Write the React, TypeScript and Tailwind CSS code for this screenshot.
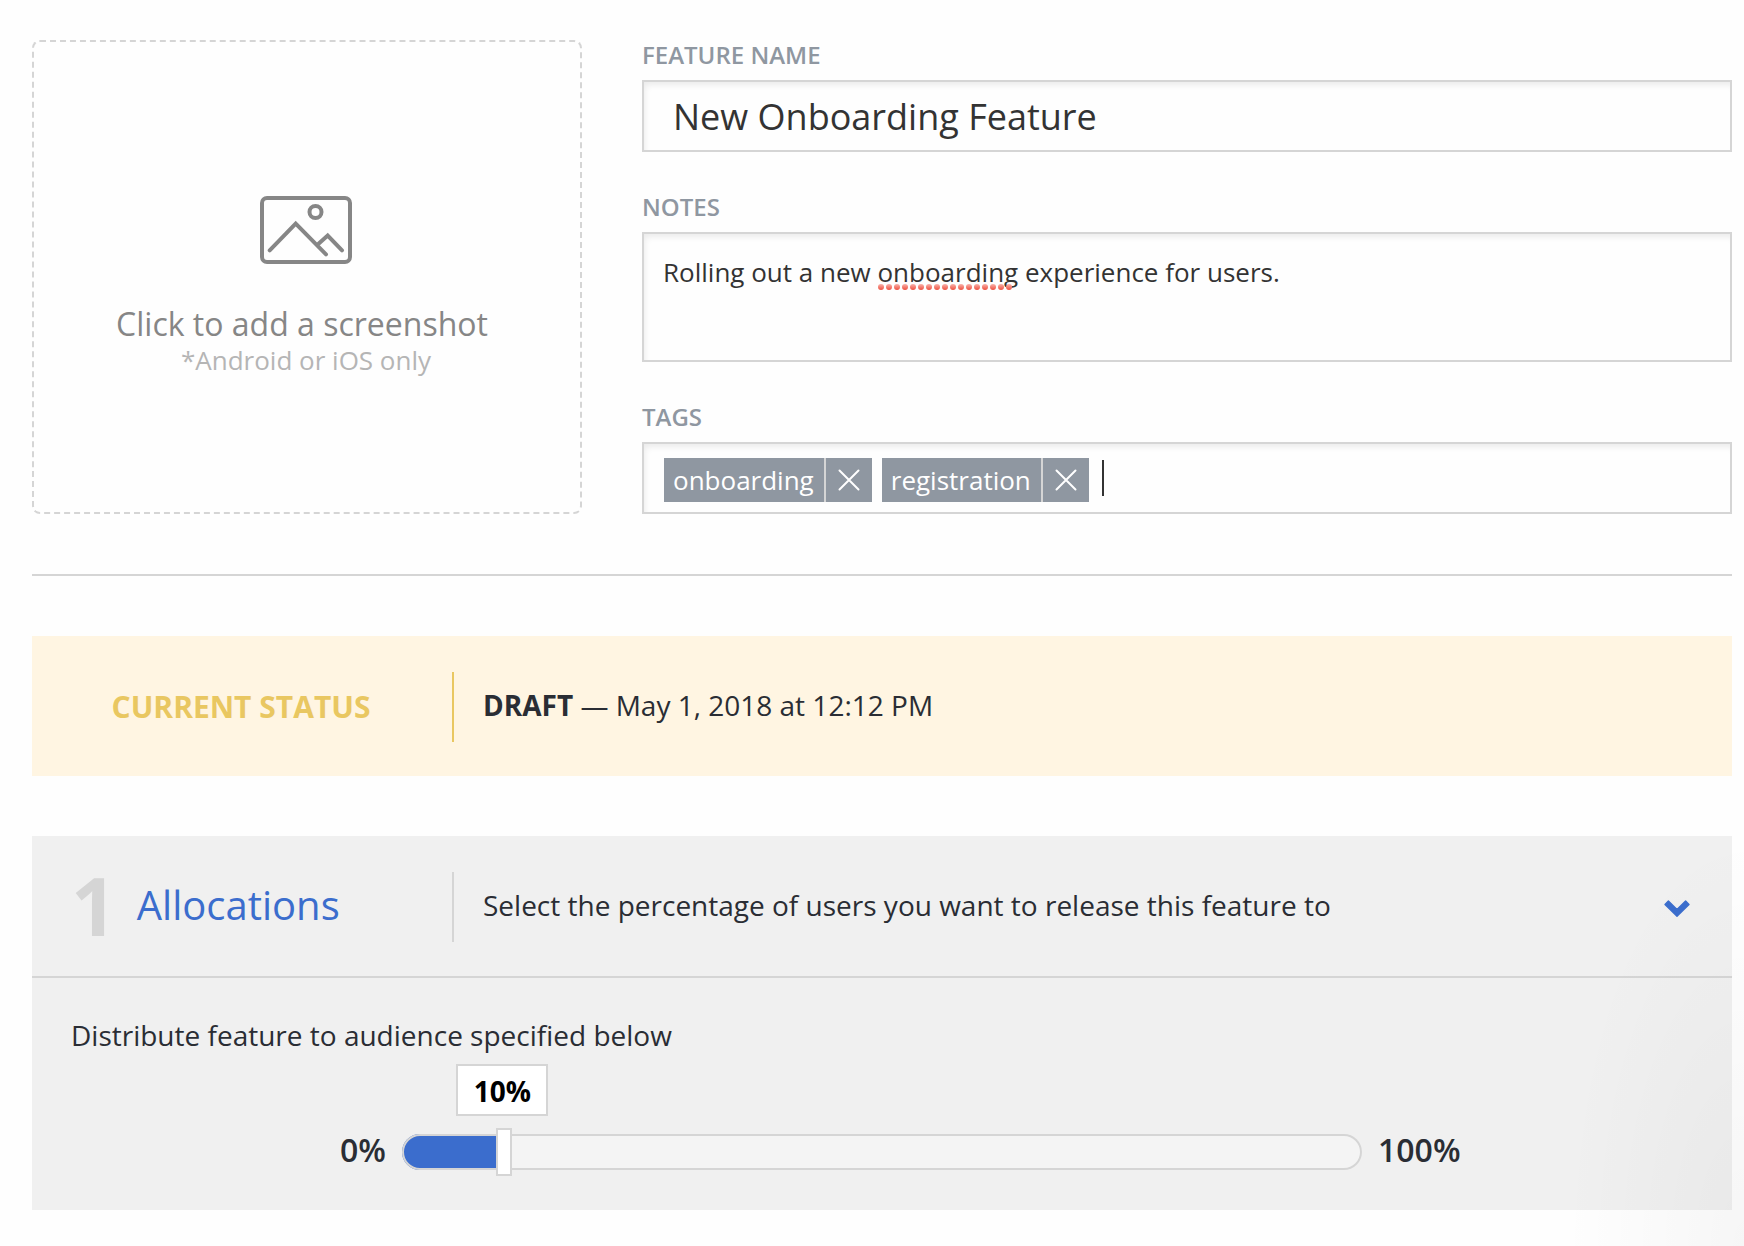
import { useState } from 'react'

const SPELLCHECK_DOTS = 17

function ImageIcon() {
  return (
    <svg width="92" height="68" viewBox="0 0 92 68" fill="none" stroke="#868686" strokeWidth="4" aria-hidden="true">
      <rect x="2" y="2" width="88" height="64" rx="5" />
      <circle cx="55.5" cy="16" r="6" />
      <path d="M9.7 54.3 35.7 27.7 66 58.3M58 48.3l9.7-8.8L82 54.3" strokeWidth="4" strokeLinecap="round" />
    </svg>
  )
}

function CloseIcon() {
  return (
    <svg width="22" height="22" viewBox="0 0 22 22" fill="none" stroke="#fff" strokeWidth="2" strokeLinecap="round" aria-hidden="true">
      <path d="M1.5 1.5l19 19M20.5 1.5l-19 19" />
    </svg>
  )
}

function ChevronIcon() {
  return (
    <svg width="26" height="18" viewBox="0 0 26 18" fill="#3b6dcd" stroke="#3b6dcd" strokeWidth="1.4" strokeLinejoin="round" aria-hidden="true">
      <path d="M4.4 1 1 4.4 13 16.2 25 4.4 21.6 1 13 9.4z" />
    </svg>
  )
}

function Tag({ name, onRemove }: { name: string; onRemove: () => void }) {
  return (
    <span className="flex h-11 bg-[#8f97a1] text-[26px] leading-[44px] text-white">
      <span className="pr-2.5 pl-[9px]">{name}</span>
      <button
        type="button"
        aria-label={`Remove ${name}`}
        onClick={onRemove}
        className="flex w-12 items-center justify-center border-l-2 border-[#d5d5d5]"
      >
        <CloseIcon />
      </button>
    </span>
  )
}

export default function App() {
  const [name, setName] = useState('New Onboarding Feature')
  const [notes, setNotes] = useState('Rolling out a new onboarding experience for users.')
  const [tags, setTags] = useState(['onboarding', 'registration'])
  const [draftTag, setDraftTag] = useState('')
  const [percent, setPercent] = useState(10)
  const [open, setOpen] = useState(true)

  const labelClass = 'mb-2.5 block text-2xl leading-[30px] font-semibold text-[#8f97a1]'
  const fieldClass = 'block w-full border-2 border-[#d5d5d5] bg-[#fefefe] text-[#333] shadow-[inset_3px_5px_6px_-2px_rgba(0,0,0,0.08)] outline-none'

  return (
    <div className="relative min-h-screen bg-[#fefefe] pt-10 pr-3 pl-8 font-['Open_Sans',sans-serif] text-[#2a2d34]">
      <section className="grid grid-cols-[55fr_109fr] gap-[60px]">
        <button
          type="button"
          className="flex flex-col items-center justify-center rounded-lg border-2 border-dashed border-[#d5d5d5] pt-5 pr-0.5"
        >
          <ImageIcon />
          <span className="mt-[42px] pr-2 text-[32px] leading-9 text-[#868686]">Click to add a screenshot</span>
          <span className="text-[26px] leading-9 text-[#b5b5b5]">*Android or iOS only</span>
        </button>

        <div className="flex flex-col gap-10">
          <div>
            <label htmlFor="feature-name" className={labelClass}>FEATURE NAME</label>
            <input
              id="feature-name"
              type="text"
              value={name}
              onChange={(e) => setName(e.target.value)}
              className={`${fieldClass} h-[72px] px-[29px] text-4xl`}
            />
          </div>

          <div>
            <label htmlFor="notes" className={labelClass}>NOTES</label>
            <div className="relative">
              <textarea
                id="notes"
                value={notes}
                spellCheck={false}
                onChange={(e) => setNotes(e.target.value)}
                className={`${fieldClass} h-[130px] resize-none px-[19px] py-5 text-[26px] leading-9`}
              />
              {/* spellcheck underline */}
              <svg width="136" height="6" className="pointer-events-none absolute top-[52px] left-[236px]" aria-hidden="true">
                <defs>
                  <linearGradient id="dot" x1="0" y1="0" x2="0" y2="1">
                    <stop offset="0" stopColor="#f9b3ab" />
                    <stop offset="1" stopColor="#ee4f3f" />
                  </linearGradient>
                </defs>
                {Array.from({ length: SPELLCHECK_DOTS }, (_, i) => (
                  <circle key={i} cx={3 + i * 8} cy="3" r="3" fill="url(#dot)" />
                ))}
              </svg>
            </div>
          </div>

          <div>
            <label htmlFor="tags" className={labelClass}>TAGS</label>
            <div className={`${fieldClass} h-[72px]`}>
              <div className="flex gap-2.5 px-5 pt-3.5">
                {tags.map((tag) => (
                  <Tag key={tag} name={tag} onRemove={() => setTags(tags.filter((t) => t !== tag))} />
                ))}
                <div className="flex flex-1 pl-[3px]">
                  <span className="mt-0.5 h-9 w-0.5 bg-[#333]" />
                  <input
                    id="tags"
                    type="text"
                    value={draftTag}
                    onChange={(e) => setDraftTag(e.target.value)}
                    className="h-11 min-w-0 flex-1 bg-transparent text-[26px] caret-transparent outline-none"
                  />
                </div>
              </div>
            </div>
          </div>
        </div>
      </section>

      <hr className="my-[60px] border-t-2 border-[#d5d5d5]" />

      <section className="flex min-h-35 items-center bg-[#fff5e2]">
        <h2 className="w-[420px] shrink-0 pr-0.5 text-center text-[30px] font-bold text-[#e9c761]">CURRENT STATUS</h2>
        <div className="mt-0.5 h-[70px] w-0.5 bg-[#e9c761]" />
        <p className="px-[29px] pb-0.5 text-[28px]">
          <strong className="font-bold">DRAFT</strong> — May 1, 2018 at 12:12 PM
        </p>
      </section>

      <section className="mt-[60px] bg-[#f0f0f0]">
        <header className="flex min-h-35 items-center pr-[42px]">
          <div className="flex h-35 w-[420px] shrink-0 items-center gap-5 pb-0.5 pl-[39px]">
            <span className="text-[80px] leading-none font-bold text-[#d5d5d5]">1</span>
            <h2 className="text-[40px] text-[#3b6dcd]">Allocations</h2>
          </div>
          <div className="mt-0.5 h-[70px] w-0.5 bg-[#d5d5d5]" />
          <p className="flex-1 px-[29px] pb-0.5 text-[28px]">Select the percentage of users you want to release this feature to</p>
          <button
            type="button"
            aria-label="Toggle allocations"
            aria-expanded={open}
            onClick={() => setOpen(!open)}
            className="mt-1.5"
          >
            <ChevronIcon />
          </button>
        </header>

        {open && (
          <div className="border-t-2 border-[#d5d5d5] px-[39px] py-10">
            <label htmlFor="percent" className="block text-[28px] leading-[34px]">
              Distribute feature to audience specified below
            </label>
            <div className="mt-[82px] grid grid-cols-[1fr_minmax(0,960px)_1fr] items-center gap-4 text-[32px] leading-8 font-semibold">
              <span className="pb-1 text-right">0%</span>
              <div className="relative h-9">
                <output
                  htmlFor="percent"
                  className="absolute bottom-full mb-[18px] h-[52px] w-[92px] -translate-x-1/2 border-2 border-[#d5d5d5] bg-white text-center text-[28px] leading-[50px] font-bold text-black"
                  style={{ left: `calc((100% - 16px) * ${percent / 100} + 6px)` }}
                >
                  {percent}%
                </output>
                <input
                  id="percent"
                  type="range"
                  min={0}
                  max={100}
                  value={percent}
                  onChange={(e) => setPercent(Number(e.target.value))}
                  className="block h-9 w-full appearance-none rounded-full shadow-[inset_0_0_0_2px_#d5d5d5] [&::-webkit-slider-runnable-track]:h-9 [&::-webkit-slider-thumb]:-mt-1.5 [&::-webkit-slider-thumb]:h-12 [&::-webkit-slider-thumb]:w-4 [&::-webkit-slider-thumb]:appearance-none [&::-webkit-slider-thumb]:border-2 [&::-webkit-slider-thumb]:border-solid [&::-webkit-slider-thumb]:border-[#d5d5d5] [&::-webkit-slider-thumb]:bg-white"
                  style={{ background: `linear-gradient(to right, #3b6dcd ${percent}%, #f4f4f4 ${percent}%)` }}
                />
              </div>
              <span className="pb-1">100%</span>
            </div>
          </div>
        )}
      </section>

      {/* soft shade in the page corner */}
      <div className="pointer-events-none absolute right-0 bottom-0 h-[420px] w-[180px] bg-[radial-gradient(100%_100%_at_100%_100%,rgba(0,0,0,0.03),transparent)]" />
    </div>
  )
}
